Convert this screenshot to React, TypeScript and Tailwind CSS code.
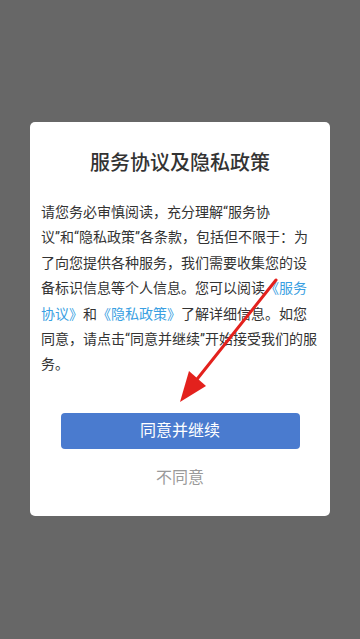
import React from "react";

const Link: React.FC<{ children: React.ReactNode }> = ({ children }) => (
  <span className="text-[#3a9fe2]">{children}</span>
);

const PrivacyDialog: React.FC = () => {
  return (
    <div className="w-[300px] rounded-[5px] bg-white px-[11px] pt-[27px] pb-[26px]">
      <h2 className="text-center text-[20px] leading-[28px] font-medium text-[#333333]">
        服务协议及隐私政策
      </h2>
      <p className="mt-[23px] whitespace-nowrap text-[14px] leading-[25.4px] text-[#333333]">
        请您务必审慎阅读，充分理解“服务协
        <br />
        议”和“隐私政策”各条款，包括但不限于：为
        <br />
        了向您提供各种服务，我们需要收集您的设
        <br />
        备标识信息等个人信息。您可以阅读<Link>《服务</Link>
        <br />
        <Link>协议》</Link>和<Link>《隐私政策》</Link>了解详细信息。如您
        <br />
        同意，请点击“同意并继续”开始接受我们的服
        <br />
        务。
      </p>
      <div className="mt-[35px] flex flex-col items-center">
        <button className="h-[36px] w-[239px] rounded-[4px] bg-[#4a7bcf] text-[16px] text-white">
          同意并继续
        </button>
        <button className="mt-[17px] text-[16px] leading-[24px] text-[#9a9a9a]">
          不同意
        </button>
      </div>
    </div>
  );
};

export default function App() {
  return (
    <div
      className="relative flex h-[639px] w-full items-start justify-center bg-[#676767] pt-[122px]"
      style={{ fontFamily: '"Roboto", "Noto Sans CJK SC", sans-serif' }}
    >
      <PrivacyDialog />
      {/* red annotation arrow */}
      <svg
        className="pointer-events-none absolute left-0 top-0"
        width="360"
        height="639"
        viewBox="0 0 360 639"
      >
        <line x1="276" y1="280" x2="194" y2="383" stroke="#e3211d" strokeWidth="3" strokeLinecap="round" />
        <polygon points="180,402 189,371 206,386" fill="#e3211d" />
      </svg>
    </div>
  );
}
